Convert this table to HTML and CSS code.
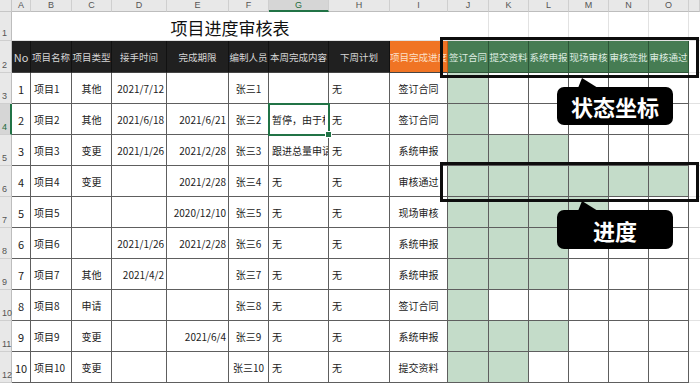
FILE: index.html
```html
<!DOCTYPE html>
<html lang="zh">
<head>
<meta charset="utf-8">
<link rel="stylesheet" href="styles.css">
</head>
<body>
<div class="sheet">
  <div class="row colhead">
    <div class="corner"></div>
    <div class="ch">A</div><div class="ch">B</div><div class="ch">C</div><div class="ch">D</div><div class="ch">E</div><div class="ch">F</div><div class="ch ch-sel">G</div><div class="ch">H</div><div class="ch">I</div><div class="ch">J</div><div class="ch">K</div><div class="ch">L</div><div class="ch">M</div><div class="ch">N</div><div class="ch">O</div><div class="ch"></div>
  </div>

  <div class="row r-title">
    <div class="rh">1</div>
    <div class="title">项目进度审核表</div>
    <div class="blank"></div><div class="blank"></div><div class="blank"></div><div class="blank"></div><div class="blank"></div><div class="blank"></div><div class="blank"></div>
  </div>

  <div class="row r-head">
    <div class="rh">2</div>
    <div class="hd">No</div>
    <div class="hd">项目名称</div>
    <div class="hd">项目类型</div>
    <div class="hd">接手时间</div>
    <div class="hd">完成期限</div>
    <div class="hd">编制人员</div>
    <div class="hd">本周完成内容</div>
    <div class="hd">下周计划</div>
    <div class="hd hd-orange">项目完成进度</div>
    <div class="hd hd-green">签订合同</div>
    <div class="hd hd-green">提交资料</div>
    <div class="hd hd-green">系统申报</div>
    <div class="hd hd-green">现场审核</div>
    <div class="hd hd-green">审核签批</div>
    <div class="hd hd-green">审核通过</div>
    <div class="blank"></div>
  </div>

  <div class="row">
    <div class="rh">3</div>
    <div class="c ctr">1</div><div class="c">项目1</div><div class="c ctr">其他</div><div class="c rt">2021/7/12</div><div class="c rt"></div><div class="c ctr">张三1</div><div class="c"></div><div class="c">无</div><div class="c ctr">签订合同</div>
    <div class="c on"></div><div class="c"></div><div class="c"></div><div class="c"></div><div class="c"></div><div class="c"></div><div class="blank"></div>
  </div>

  <div class="row">
    <div class="rh rh-sel">4</div>
    <div class="c ctr">2</div><div class="c">项目2</div><div class="c ctr">其他</div><div class="c rt">2021/6/18</div><div class="c rt">2021/6/21</div><div class="c ctr">张三2</div><div class="c sel"><span class="clip">暂停，由于标</span></div><div class="c">无</div><div class="c ctr">签订合同</div>
    <div class="c on"></div><div class="c"></div><div class="c"></div><div class="c"></div><div class="c"></div><div class="c"></div><div class="blank"></div>
  </div>

  <div class="row">
    <div class="rh">5</div>
    <div class="c ctr">3</div><div class="c">项目3</div><div class="c ctr">变更</div><div class="c rt">2021/1/26</div><div class="c rt">2021/2/28</div><div class="c ctr">张三3</div><div class="c">跟进总量申请</div><div class="c">无</div><div class="c ctr">系统申报</div>
    <div class="c on"></div><div class="c on"></div><div class="c on"></div><div class="c"></div><div class="c"></div><div class="c"></div><div class="blank"></div>
  </div>

  <div class="row">
    <div class="rh">6</div>
    <div class="c ctr">4</div><div class="c">项目4</div><div class="c ctr">变更</div><div class="c rt"></div><div class="c rt">2021/2/28</div><div class="c ctr">张三4</div><div class="c">无</div><div class="c">无</div><div class="c ctr">审核通过</div>
    <div class="c on"></div><div class="c on"></div><div class="c on"></div><div class="c on"></div><div class="c on"></div><div class="c on"></div><div class="blank"></div>
  </div>

  <div class="row">
    <div class="rh">7</div>
    <div class="c ctr">5</div><div class="c">项目5</div><div class="c ctr"></div><div class="c rt"></div><div class="c rt">2020/12/10</div><div class="c ctr">张三5</div><div class="c">无</div><div class="c">无</div><div class="c ctr">现场审核</div>
    <div class="c on"></div><div class="c on"></div><div class="c on"></div><div class="c on"></div><div class="c"></div><div class="c"></div><div class="blank"></div>
  </div>

  <div class="row">
    <div class="rh">8</div>
    <div class="c ctr">6</div><div class="c">项目6</div><div class="c ctr"></div><div class="c rt">2021/1/26</div><div class="c rt">2021/2/28</div><div class="c ctr">张三6</div><div class="c">无</div><div class="c">无</div><div class="c ctr">系统申报</div>
    <div class="c on"></div><div class="c on"></div><div class="c on"></div><div class="c"></div><div class="c"></div><div class="c"></div><div class="blank"></div>
  </div>

  <div class="row">
    <div class="rh">9</div>
    <div class="c ctr">7</div><div class="c">项目7</div><div class="c ctr">其他</div><div class="c rt">2021/4/2</div><div class="c rt"></div><div class="c ctr">张三7</div><div class="c">无</div><div class="c">无</div><div class="c ctr">系统申报</div>
    <div class="c on"></div><div class="c on"></div><div class="c on"></div><div class="c"></div><div class="c"></div><div class="c"></div><div class="blank"></div>
  </div>

  <div class="row">
    <div class="rh">10</div>
    <div class="c ctr">8</div><div class="c">项目8</div><div class="c ctr">申请</div><div class="c rt"></div><div class="c rt"></div><div class="c ctr">张三8</div><div class="c">无</div><div class="c">无</div><div class="c ctr">签订合同</div>
    <div class="c on"></div><div class="c"></div><div class="c"></div><div class="c"></div><div class="c"></div><div class="c"></div><div class="blank"></div>
  </div>

  <div class="row">
    <div class="rh">11</div>
    <div class="c ctr">9</div><div class="c">项目9</div><div class="c ctr">变更</div><div class="c rt"></div><div class="c rt">2021/6/4</div><div class="c ctr">张三9</div><div class="c">无</div><div class="c">无</div><div class="c ctr">系统申报</div>
    <div class="c on"></div><div class="c on"></div><div class="c on"></div><div class="c"></div><div class="c"></div><div class="c"></div><div class="blank"></div>
  </div>

  <div class="row">
    <div class="rh">12</div>
    <div class="c ctr">10</div><div class="c">项目10</div><div class="c ctr">变更</div><div class="c rt"></div><div class="c rt"></div><div class="c ctr">张三10</div><div class="c">无</div><div class="c">无</div><div class="c ctr">提交资料</div>
    <div class="c on"></div><div class="c on"></div><div class="c"></div><div class="c"></div><div class="c"></div><div class="c"></div><div class="blank"></div>
  </div>

  <div class="frame frame-head"></div>
  <div class="frame frame-row"></div>

  <div class="callout callout-status">
    <svg class="tail" width="24" height="10" viewBox="0 0 24 10"><path d="M2 10 L6 0 L22 10 Z" fill="#000"/></svg>
    状态坐标
  </div>
  <div class="callout callout-progress">
    <svg class="tail" width="24" height="10" viewBox="0 0 24 10"><path d="M2 10 L6 0 L22 10 Z" fill="#000"/></svg>
    进度
  </div>
</div>
</body>
</html>
```

FILE: styles.css
```css
* { box-sizing: border-box; }

html, body {
  margin: 0;
  padding: 0;
  background: #ffffff;
}

.sheet {
  position: relative;
  width: 700px;
  height: 383px;
  overflow: hidden;
  font-family: "Noto Sans CJK SC", "Noto Sans", sans-serif;
  font-size: 10px;
  color: #222;
}

.row {
  display: grid;
  grid-template-columns: 12px 19px 41px 40px 55px 62px 40px 60px 61px 58px 41px 40px 40px 40px 40px 40px 11px;
  height: 31px;
}

/* column letters */
.colhead { height: 12px; background: #e8e8e8; }
.corner {
  background: #e8e8e8;
  border-right: 1px solid #c6c6c6;
  border-bottom: 1px solid #c6c6c6;
}
.ch {
  display: flex;
  align-items: center;
  justify-content: center;
  font-family: "Liberation Sans", sans-serif;
  font-size: 9px;
  color: #555;
  border-right: 1px solid #cfcfcf;
  border-bottom: 1px solid #bdbdbd;
  line-height: 1;
}
.ch-sel {
  background: #d6d6d6;
  color: #1e6b3c;
  border-bottom: 2px solid #217346;
}

/* row numbers */
.rh {
  background: #e8e8e8;
  border-right: 1px solid #bdbdbd;
  border-bottom: 1px solid #cfcfcf;
  font-family: "Liberation Sans", sans-serif;
  font-size: 9px;
  color: #555;
  display: flex;
  align-items: flex-end;
  padding: 0 0 2px 2px;
  line-height: 1;
}
.rh-sel {
  background: #d6d6d6;
  color: #1e6b3c;
  border-right: 2px solid #217346;
}

/* title row */
.r-title { height: 29px; }
.title {
  grid-column: span 9;
  display: flex;
  align-items: center;
  justify-content: center;
  font-size: 17px;
  color: #111;
  border-bottom: 1px solid #e2e2e2;
  padding-top: 2px;
}
.blank {
  border-right: 1px solid #e2e2e2;
  border-bottom: 1px solid #e2e2e2;
}
.row .blank:last-child { border-right: none; }

/* header row */
.r-head { height: 32px; }
.hd {
  background: #202020;
  color: #d6d6d6;
  font-size: 9.5px;
  display: flex;
  align-items: center;
  justify-content: center;
  white-space: nowrap;
  overflow: hidden;
  border-right: 1px solid #111;
  border-bottom: 1px solid #444;
}
.hd:nth-child(2) { font-size: 11px; }
.hd-orange {
  background: #f07424;
  color: #fde0c8;
  border-right: 1px solid #c55a15;
}
.hd-green {
  background: #467c53;
  color: #dfece2;
  border-right: 1px solid #2c5537;
  border-bottom: 1px solid #2c5537;
}

/* body cells */
.c {
  display: flex;
  align-items: center;
  padding: 1px 3px 0;
  white-space: nowrap;
  overflow: hidden;
  border-right: 1px solid #5e5e5e;
  border-bottom: 1px solid #5e5e5e;
  font-size: 10px;
}
.c.ctr { justify-content: center; }
.c.rt { justify-content: flex-end; padding-right: 2px; }
.c:nth-child(2) { font-size: 11px; }
.c.on { background: #c4dcc9; }

.c.sel {
  position: relative;
  overflow: visible;
  outline: 2px solid #217346;
  outline-offset: -1px;
  z-index: 2;
}
.c.sel .clip {
  display: block;
  min-width: 0;
  overflow: hidden;
  white-space: nowrap;
}
.c.sel::after {
  content: "";
  position: absolute;
  right: -4px;
  bottom: -4px;
  width: 5px;
  height: 5px;
  background: #217346;
  border: 1px solid #fff;
}

/* annotation overlays */
.frame {
  position: absolute;
  left: 440px;
  width: 259px;
  border: 3px solid #0d0d0d;
  z-index: 5;
}
.frame-head { top: 37px; height: 41px; }
.frame-row { top: 162px; height: 40px; }

.callout {
  position: absolute;
  left: 557px;
  width: 116px;
  height: 38px;
  background: #000;
  border-radius: 7px;
  color: #fff;
  font-weight: 700;
  font-size: 22px;
  display: flex;
  align-items: center;
  justify-content: center;
  z-index: 6;
  line-height: 1;
}
.callout .tail {
  position: absolute;
  left: 19px;
  top: -9px;
}
.callout-status { top: 87px; }
.callout-progress { top: 210px; height: 39px; }
```
